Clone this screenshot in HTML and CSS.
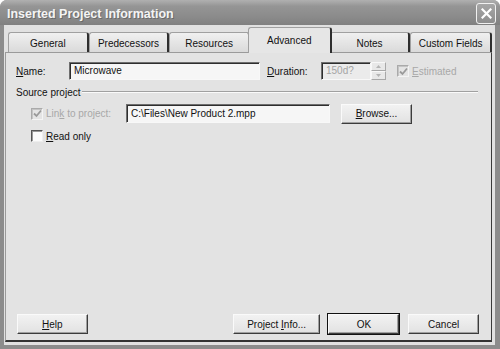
FILE: index.html
```html
<!DOCTYPE html>
<html lang="en">
<head>
    <meta charset="UTF-8">
    <title>Inserted Project Information</title>
    <link rel="stylesheet" href="styles.css">
</head>
<body>

<div class="window">
    <div class="titlebar">
        <span class="title">Inserted Project Information</span>
        <span class="close">
            <svg width="11" height="11" viewBox="0 0 11 11"><path d="M1.5 1.5 L9.5 9.5 M9.5 1.5 L1.5 9.5" stroke="#fff" stroke-width="2.2" stroke-linecap="square"/></svg>
        </span>
    </div>

    <div class="frame">
        <div class="tabs">
            <div class="tab">General</div>
            <div class="tab">Predecessors</div>
            <div class="tab">Resources</div>
            <div class="tab active">Advanced</div>
            <div class="tab">Notes</div>
            <div class="tab">Custom Fields</div>
        </div>

        <div class="panel">
            <div class="row row-name">
                <label class="lbl lbl-name"><u>N</u>ame:</label>
                <div class="textbox tb-name">Microwave</div>
                <label class="lbl lbl-dur"><u>D</u>uration:</label>
                <div class="textbox tb-dur disabled">150d?</div>
                <div class="spinner">
                    <span class="spin"><svg width="5" height="3" viewBox="0 0 5 3"><path d="M0 3 L2.5 0 L5 3Z" fill="#b4b4b4"/></svg></span>
                    <span class="spin"><svg width="5" height="3" viewBox="0 0 5 3"><path d="M0 0 L2.5 3 L5 0Z" fill="#b4b4b4"/></svg></span>
                </div>
                <span class="check disabled est">
                    <svg width="9" height="9" viewBox="0 0 9 9"><path d="M1 4.5 L3.5 7 L8 1.5" stroke="#9a9a9a" stroke-width="1.8" fill="none"/></svg>
                </span>
                <span class="check-lbl disabled-text"><u>E</u>stimated</span>
            </div>

            <div class="group">
                <span>Source project</span>
                <div class="group-line"></div>
            </div>

            <div class="row row-link">
                <span class="check disabled">
                    <svg width="9" height="9" viewBox="0 0 9 9"><path d="M1 4.5 L3.5 7 L8 1.5" stroke="#9a9a9a" stroke-width="1.8" fill="none"/></svg>
                </span>
                <span class="check-lbl lbl-link disabled-text">Lin<u>k</u> to project:</span>
                <div class="textbox tb-file">C:\Files\New Product 2.mpp</div>
                <button class="btn btn-browse"><u>B</u>rowse...</button>
            </div>

            <div class="row row-read">
                <span class="check"></span>
                <span class="check-lbl"><u>R</u>ead only</span>
            </div>

            <div class="buttons">
                <button class="btn btn-help"><u>H</u>elp</button>
                <button class="btn btn-info">Project <u>I</u>nfo...</button>
                <button class="btn btn-ok">OK</button>
                <button class="btn btn-cancel">Cancel</button>
            </div>
        </div>
    </div>
</div>

</body>
</html>
```

FILE: styles.css
```css
body {
    margin: 0;
    font-family: "Liberation Sans", Arial, sans-serif;
    font-size: 10px;
    color: #111;
    background: #fff;
}
.window {
    width: 500px;
    height: 349px;
    background: #8c8c8c;
    border-radius: 7px 7px 0 0;
    display: flex;
    flex-direction: column;
}
.titlebar {
    height: 25px;
    flex: none;
    display: flex;
    align-items: center;
    justify-content: space-between;
    padding: 0 4px 0 7px;
    border-radius: 7px 7px 0 0;
    background: linear-gradient(#b0b0b0, #959595 25%, #8a8a8a 70%, #808080);
}
.title {
    font-size: 12.5px;
    font-weight: bold;
    color: #f4f4f4;
    text-shadow: 1px 1px 0 #6a6a6a;
    margin-top: 2px;
}
.close {
    width: 18px;
    height: 19px;
    margin-top: 2px;
    border: 1px solid #f0f0f0;
    border-radius: 3px;
    background: linear-gradient(#a6a6a6, #8e8e8e);
    display: flex;
    align-items: center;
    justify-content: center;
}
.frame {
    flex: 1;
    margin: 0 5px 4px 4px;
    padding: 3px 3px 3px 1px;
    background: #e1e1e1;
    display: flex;
    flex-direction: column;
}
.tabs {
    height: 24px;
    flex: none;
    display: flex;
    align-items: flex-end;
    padding-left: 3px;
    position: relative;
    z-index: 1;
}
.tab {
    width: 79px;
    height: 19px;
    border: 1px solid #a0a0a0;
    border-right: 2px solid #2e2e2e;
    border-bottom: none;
    border-radius: 3px 3px 0 0;
    background: linear-gradient(#f0f0f0, #dadada);
    text-align: center;
    line-height: 21px;
    font-size: 10px;
}
.tab.active {
    width: 82px;
    height: 25px;
    margin: 0 -2px -1px -2px;
    line-height: 25px;
    background: #e6e6e6;
    position: relative;
    z-index: 2;
}
.tab:last-child {
    width: 80px;
}
.panel {
    flex: 1;
    border: 1px solid #9a9a9a;
    border-right: 1px solid #3a3a3a;
    border-bottom: 2px solid #333;
    background: #e3e3e3;
    padding: 9px 12px 6px 10px;
    display: flex;
    flex-direction: column;
}
.row {
    display: flex;
    align-items: center;
}
.row-name {
    height: 18px;
}
.lbl-name {
    width: 53px;
}
.lbl-dur {
    width: 54px;
    margin-left: 7px;
}
.textbox {
    height: 16px;
    line-height: 16px;
    padding: 0 4px;
    background: #f6f6f6;
    border: 1px solid;
    border-color: #6e6e6e #f8f8f8 #f8f8f8 #6e6e6e;
    box-shadow: inset 1px 1px 0 #2e2e2e;
    white-space: nowrap;
    overflow: hidden;
}
.tb-name {
    width: 181px;
}
.tb-dur {
    width: 40px;
}
.textbox.disabled {
    color: #a4a4a4;
    background: #ebebeb;
}
.spinner {
    width: 15px;
    height: 18px;
    display: flex;
    flex-direction: column;
}
.spin {
    flex: 1;
    display: flex;
    align-items: center;
    justify-content: center;
    background: #e8e8e8;
    border: 1px solid;
    border-color: #f8f8f8 #a8a8a8 #a8a8a8 #f8f8f8;
}
.check {
    width: 10px;
    height: 10px;
    flex: none;
    background: #fbfbfb;
    border: 1px solid;
    border-color: #555 #eee #eee #555;
    box-shadow: inset 1px 1px 0 #999;
    display: flex;
    align-items: center;
    justify-content: center;
}
.check.disabled {
    background: #e4e4e4;
    border-color: #aaa #f4f4f4 #f4f4f4 #aaa;
    box-shadow: inset 1px 1px 0 #c4c4c4;
}
.check.est {
    margin-left: 11px;
}
.check-lbl {
    margin-left: 3px;
}
.disabled-text {
    color: #a8a8a8;
}
.group {
    display: flex;
    align-items: center;
    height: 12px;
    margin-top: 6px;
}
.group-line {
    flex: 1;
    margin-left: 2px;
    border-top: 1px solid #a0a0a0;
    border-bottom: 1px solid #fafafa;
    margin-right: 1px;
}
.row-link {
    height: 19px;
    margin-top: 6px;
    padding-left: 15px;
}
.lbl-link {
    width: 80px;
}
.tb-file {
    width: 194px;
    height: 17px;
    line-height: 17px;
    color: #111;
}
.btn {
    font-family: "Liberation Sans", Arial, sans-serif;
    font-size: 10px;
    color: #111;
    height: 20px;
    padding: 0;
    background: linear-gradient(#f2f2f2, #e2e2e2);
    border: 1px solid;
    border-color: #fafafa #3c3c3c #3c3c3c #fafafa;
    box-shadow: inset -1px -1px 0 #a0a0a0;
}
.btn-browse {
    width: 71px;
    height: 20px;
    margin-left: 11px;
}
.row-read {
    height: 12px;
    margin-top: 7px;
    padding-left: 15px;
}
.buttons {
    margin-top: auto;
    display: flex;
    align-items: center;
    padding-left: 1px;
}
.btn-help {
    width: 71px;
}
.btn-info {
    width: 88px;
    margin-left: 145px;
}
.btn-ok {
    width: 71px;
    margin-left: 8px;
    outline: 1px solid #111;
    outline-offset: 0;
}
.btn-cancel {
    width: 71px;
    margin-left: 9px;
}
```
